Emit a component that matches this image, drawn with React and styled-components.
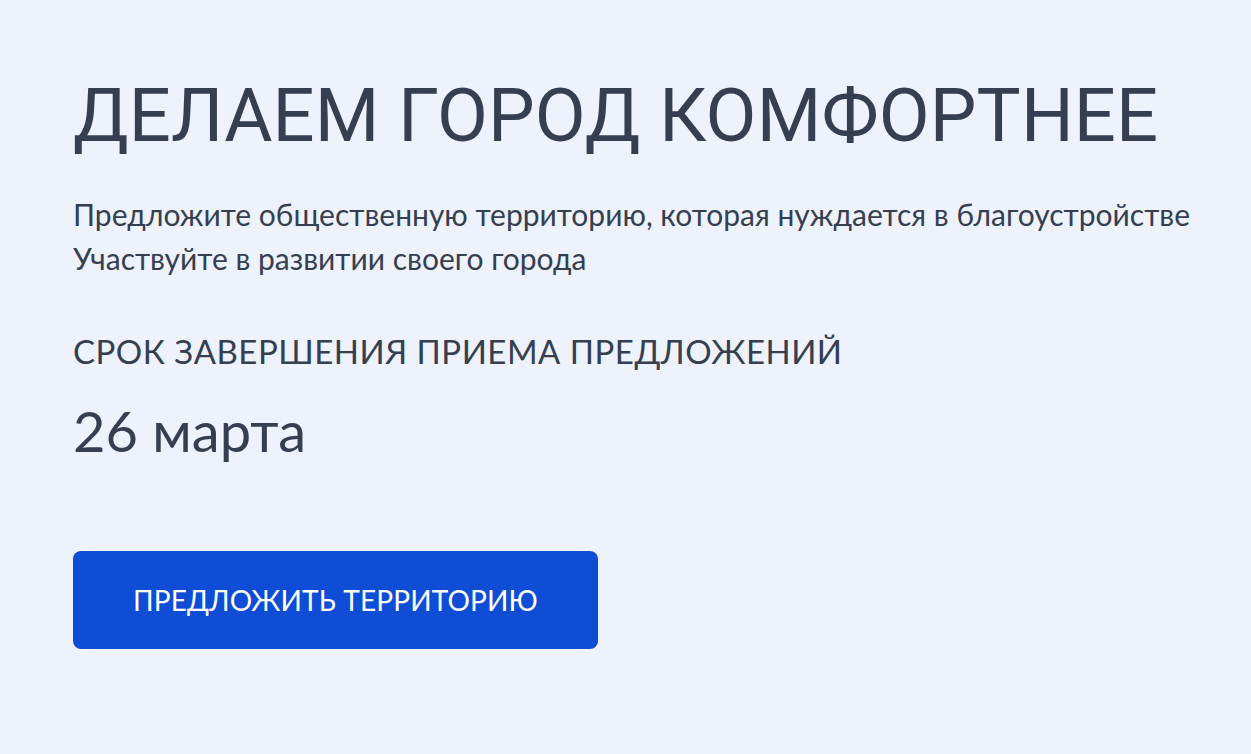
import React from 'react';
import styled, { createGlobalStyle } from 'styled-components';

const GlobalStyle = createGlobalStyle`
  html, body {
    margin: 0;
    padding: 0;
    background: #eef2fd;
  }
  body {
    font-family: Lato, "Noto Sans", sans-serif;
    color: #353f51;
  }
`;

const Page = styled.main`
  min-height: 754px;
  box-sizing: border-box;
  padding: 76px 73px 0;
  display: flex;
  flex-direction: column;
  align-items: flex-start;
`;

const Title = styled.h1`
  margin: 0;
  font-family: Roboto, "Liberation Sans", sans-serif;
  font-weight: 400;
  font-size: 74px;
  line-height: 80px;
  letter-spacing: 0.15px;
  white-space: nowrap;
`;

const Lead = styled.p`
  margin: 36px 0 0;
  font-size: 30px;
  line-height: 44px;
  white-space: nowrap;
`;

const Label = styled.h3`
  margin: 51px 0 0;
  font-weight: 400;
  font-size: 33px;
  line-height: 40px;
  letter-spacing: 0.5px;
`;

const Deadline = styled.div`
  margin-top: 26px;
  font-size: 56px;
  line-height: 68px;
`;

const SubmitButton = styled.button`
  margin-top: 86px;
  width: 525px;
  height: 98px;
  border: none;
  border-radius: 8px;
  background: #0f4dd6;
  color: #fff;
  font-family: Lato, "Noto Sans", sans-serif;
  font-size: 28px;
  letter-spacing: 0.15px;
  cursor: pointer;
`;

export default function App() {
  return (
    <>
      <GlobalStyle />
      <Page>
        <Title>ДЕЛАЕМ ГОРОД КОМФОРТНЕЕ</Title>
        <Lead>
          Предложите общественную территорию, которая нуждается в благоустройстве
          <br />
          Участвуйте в развитии своего города
        </Lead>
        <Label>СРОК ЗАВЕРШЕНИЯ ПРИЕМА ПРЕДЛОЖЕНИЙ</Label>
        <Deadline>26 марта</Deadline>
        <SubmitButton>ПРЕДЛОЖИТЬ ТЕРРИТОРИЮ</SubmitButton>
      </Page>
    </>
  );
}
